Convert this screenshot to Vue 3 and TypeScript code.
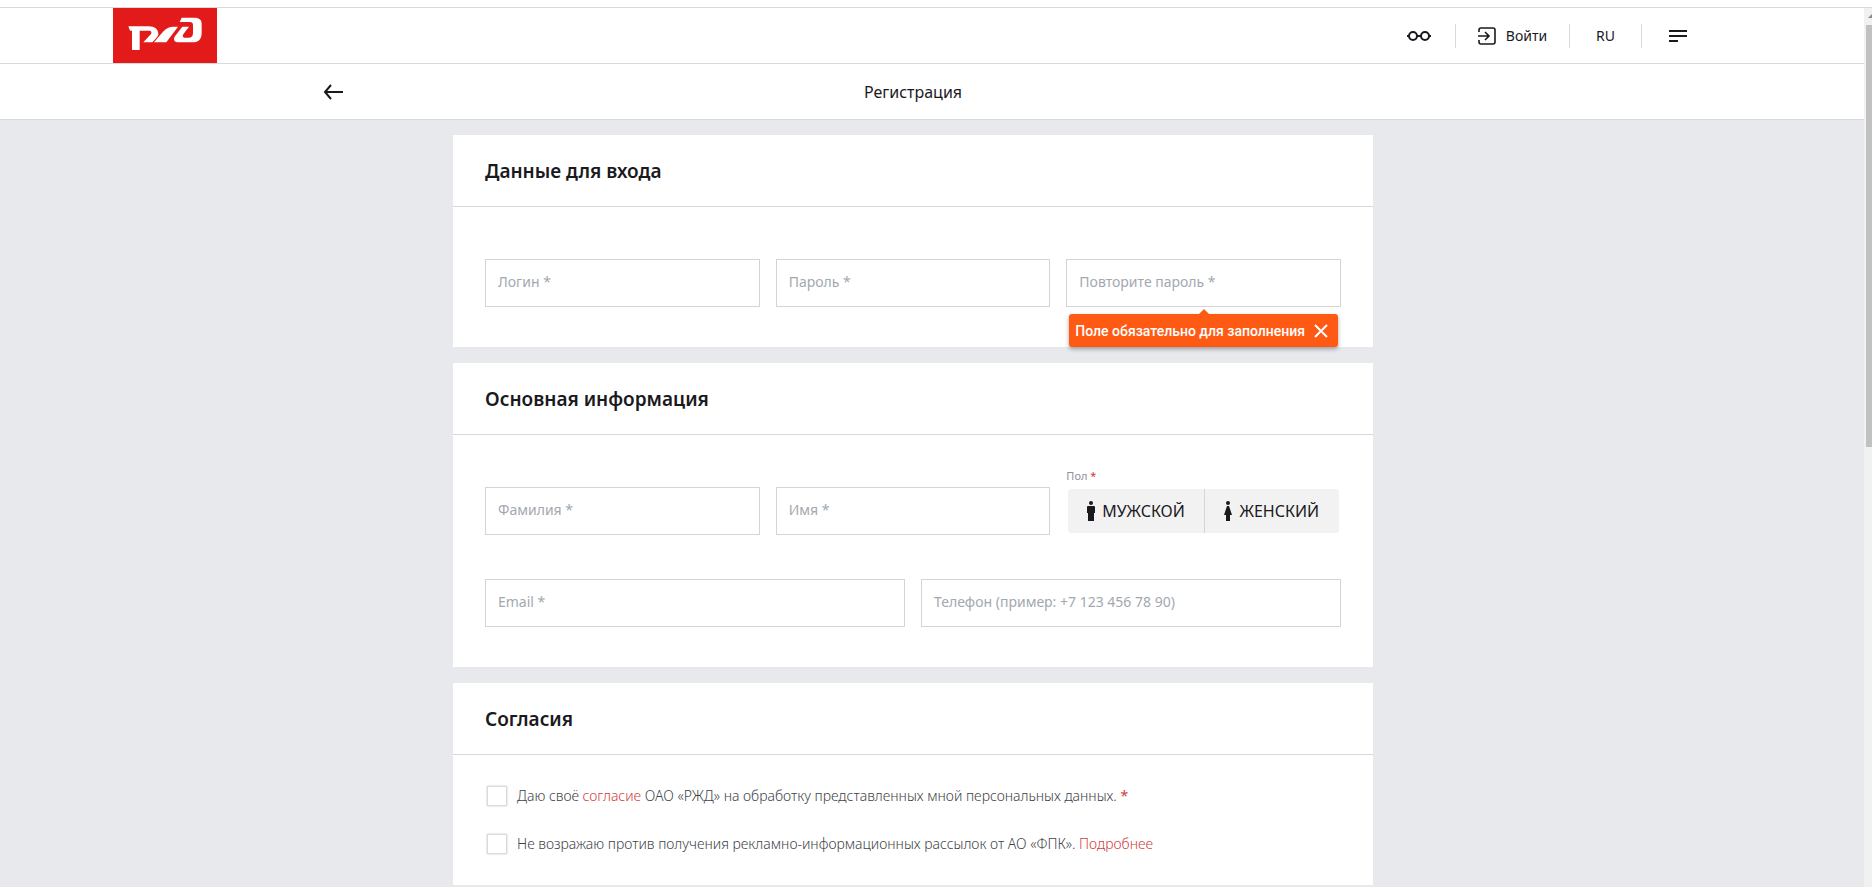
<script setup lang="ts">
import { reactive, ref } from 'vue'

interface Field {
  id: string
  label: string
  type: string
}

const loginFields: Field[] = [
  { id: 'login', label: 'Логин *', type: 'text' },
  { id: 'password', label: 'Пароль *', type: 'password' },
  { id: 'repeat', label: 'Повторите пароль *', type: 'password' },
]
const nameFields: Field[] = [
  { id: 'surname', label: 'Фамилия *', type: 'text' },
  { id: 'name', label: 'Имя *', type: 'text' },
]
const contactFields: Field[] = [
  { id: 'email', label: 'Email *', type: 'email' },
  { id: 'phone', label: 'Телефон (пример: +7 123 456 78 90)', type: 'tel' },
]

const values = reactive<Record<string, string>>({})
const showError = ref(true)
const gender = ref<'m' | 'f' | ''>('')
const agree = ref(false)
const mailing = ref(false)
</script>

<template>
  <div class="window">
    <div class="chrome"></div>
    <div class="viewport">
      <div class="page">
        <header class="bar">
          <div class="wide">
            <a class="logo" href="#">
              <svg viewBox="69 24 312 165" width="104" height="55">
                <g fill="#fff">
                  <path d="M115 79H176C194 79 205 88 205 102C205 107 201 112 196 117L187 127H160L183 102C186 98 184 92 178 92H149V150H126V92H120Z" />
                  <path d="M192 127L219 95C230 83 240 80 252 80H264L229 127Z" />
                  <path d="M269 66L275 53H313C329 53 335 60 335 72V98C335 117 326 127 308 127H266C252 127 248 117 256 107L277 80H297L281 101C276 108 279 113 286 113H295C305 113 309 108 309 98V76C309 69 306 66 299 66Z" />
                </g>
              </svg>
            </a>
            <nav class="menu">
              <button class="cell" type="button">
                <svg width="24" height="12" viewBox="0 0 24 12" fill="none" stroke="#1a1a1e" stroke-width="2">
                  <circle cx="6" cy="6" r="4" /><circle cx="18" cy="6" r="4" />
                  <path d="M0 6H2M10 6H14M22 6H24" />
                </svg>
              </button>
              <a class="cell login" href="#">
                <svg width="18" height="18" viewBox="0 0 18 18" fill="none" stroke="#1a1a1e" stroke-width="1.6">
                  <path d="M1 5V3A2 2 0 0 1 3 1H15A2 2 0 0 1 17 3V15A2 2 0 0 1 15 17H3A2 2 0 0 1 1 15V13M0 9H11M7 5L11 9L7 13" />
                </svg>
                Войти
              </a>
              <button class="cell" type="button">RU</button>
              <button class="cell" type="button">
                <svg width="18" height="12" viewBox="0 0 18 12" stroke="#1a1a1e" stroke-width="2">
                  <path d="M0 1H18M0 6H18M0 11H9" />
                </svg>
              </button>
            </nav>
          </div>
        </header>
        <div class="bar">
          <div class="narrow">
            <a class="back" href="#">
              <svg width="20" height="16" viewBox="0 0 20 16" fill="none" stroke="#1a1a1e" stroke-width="2">
                <path d="M20 8H2M8 1L2 8L8 15" />
              </svg>
            </a>
            <h1>Регистрация</h1>
          </div>
        </div>

        <main class="content">
          <form class="form" @submit.prevent>
            <section class="card">
              <h2>Данные для входа</h2>
              <div class="body thirds">
                <div v-for="f in loginFields" :key="f.id" class="field" :class="{ filled: values[f.id] }">
                  <input :id="f.id" v-model="values[f.id]" :type="f.type" />
                  <label :for="f.id">{{ f.label }}</label>
                  <div v-if="f.id === 'repeat' && showError" class="tip" role="alert">
                    <span>Поле обязательно для заполнения</span>
                    <button type="button" @click="showError = false">
                      <svg width="14" height="14" viewBox="0 0 14 14" stroke="#fff" stroke-width="2">
                        <path d="M1 1L13 13M13 1L1 13" />
                      </svg>
                    </button>
                  </div>
                </div>
              </div>
            </section>

            <section class="card">
              <h2>Основная информация</h2>
              <div class="body">
                <div class="thirds">
                  <div v-for="f in nameFields" :key="f.id" class="field" :class="{ filled: values[f.id] }">
                    <input :id="f.id" v-model="values[f.id]" :type="f.type" />
                    <label :for="f.id">{{ f.label }}</label>
                  </div>
                  <fieldset class="gender">
                    <legend>Пол <i>*</i></legend>
                    <div class="toggle">
                      <button type="button" :aria-pressed="gender === 'm'" @click="gender = 'm'">
                        <svg width="8" height="20" viewBox="0 0 8 20" fill="#1a1a1e">
                          <circle cx="4" cy="2" r="2" />
                          <path d="M1 5H7Q8 5 8 6V12H7V20H1V12H0V6Q0 5 1 5Z" />
                        </svg>
                        МУЖСКОЙ
                      </button>
                      <button type="button" :aria-pressed="gender === 'f'" @click="gender = 'f'">
                        <svg width="8" height="20" viewBox="0 0 8 20" fill="#1a1a1e">
                          <circle cx="4" cy="2" r="2" />
                          <path d="M3 5H5L8 14H6V20H2V14H0Z" />
                        </svg>
                        ЖЕНСКИЙ
                      </button>
                    </div>
                  </fieldset>
                </div>
                <div class="halves">
                  <div v-for="f in contactFields" :key="f.id" class="field" :class="{ filled: values[f.id] }">
                    <input :id="f.id" v-model="values[f.id]" :type="f.type" />
                    <label :for="f.id">{{ f.label }}</label>
                  </div>
                </div>
              </div>
            </section>

            <section class="card">
              <h2>Согласия</h2>
              <div class="consents">
                <div class="consent">
                  <input id="agree" v-model="agree" type="checkbox" />
                  <label for="agree">Даю своё <a href="#">согласие</a> ОАО «РЖД» на обработку представленных мной персональных данных. <b>*</b></label>
                </div>
                <div class="consent">
                  <input id="mailing" v-model="mailing" type="checkbox" />
                  <label for="mailing">Не возражаю против получения рекламно-информационных рассылок от АО «ФПК». <a href="#">Подробнее</a></label>
                </div>
              </div>
            </section>
          </form>
        </main>
      </div>
      <div class="scroll">
        <svg width="8" height="17" viewBox="0 0 8 17"><path d="M4 10L8 6V10Z" fill="#8a8a8a" /></svg>
        <div class="thumb"></div>
      </div>
    </div>
  </div>
</template>

<style>
body {
  overflow: hidden;
}
</style>

<style scoped>
.window,
.window * {
  box-sizing: border-box;
}
.window {
  display: flex;
  flex-direction: column;
  height: 100vh;
  font-family: "Noto Sans", "Open Sans", sans-serif;
  font-size: 14px;
  line-height: 20px;
  color: #1a1a1e;
  background: #fff;
}
.chrome {
  flex: none;
  height: 8px;
  border-bottom: 1px solid #d9d9dc;
}
.viewport {
  flex: 1;
  min-height: 0;
  display: flex;
}
.page {
  flex: 1;
  overflow: hidden;
  background: #e8e9ed;
}
.bar {
  height: 56px;
  padding-right: 38px;
  background: #fff;
  border-bottom: 1px solid #d8d9dc;
}
.wide {
  display: flex;
  justify-content: space-between;
  max-width: 1600px;
  height: 100%;
  margin: 0 auto;
}
.logo {
  background: #e21a1a;
}
.logo svg {
  display: block;
}
.menu {
  display: flex;
  align-items: center;
}
button {
  padding: 0;
  border: 0;
  background: none;
  color: inherit;
  font: inherit;
  cursor: pointer;
}
.cell {
  display: flex;
  align-items: center;
  justify-content: center;
  width: 72px;
  height: 24px;
  color: inherit;
  text-decoration: none;
}
.cell + .cell {
  border-left: 1px solid #d8d9dc;
}
.cell.login {
  width: 114px;
  gap: 10px;
}
.narrow {
  display: grid;
  grid-template-columns: 1fr auto 1fr;
  align-items: center;
  max-width: 1180px;
  height: 100%;
  margin: 0 auto;
}
.back svg {
  display: block;
}
h1 {
  margin: 0;
  font-size: 16px;
  font-weight: 400;
}
.content {
  padding: 15px 38px 16px 0;
}
.form {
  display: flex;
  flex-direction: column;
  gap: 16px;
  max-width: 920px;
  margin: 0 auto;
}
.card {
  background: #fff;
}
h2 {
  margin: 0;
  padding: 22px 32px 21px;
  border-bottom: 1px solid #d5d9db;
  font-size: 19px;
  line-height: 28px;
  font-weight: 600;
}
.body {
  padding: 28px 32px 40px;
}
.thirds {
  display: grid;
  grid-template-columns: repeat(3, 1fr);
  gap: 16px;
}
.halves {
  display: grid;
  grid-template-columns: repeat(2, 1fr);
  gap: 16px;
  margin-top: 20px;
}
.field {
  position: relative;
  padding-top: 24px;
}
.field input {
  display: block;
  width: 100%;
  height: 48px;
  padding: 0 12px;
  border: 1px solid #d3d4d8;
  border-radius: 0;
  background: #fff;
  font: inherit;
  outline: 0;
}
.field label {
  position: absolute;
  left: 13px;
  top: 37px;
  color: #a3a8b0;
  pointer-events: none;
}
.field.filled label {
  top: 2px;
  left: 0;
  font-size: 10px;
}
.tip {
  position: absolute;
  z-index: 1;
  top: 79px;
  left: 3px;
  right: 3px;
  display: flex;
  align-items: center;
  justify-content: space-between;
  height: 33px;
  padding: 0 10px 0 6px;
  border-radius: 3px;
  background: #ff5a14;
  box-shadow: 0 2px 4px rgba(0, 0, 0, 0.35);
  color: #fff;
  font-family: Roboto, sans-serif;
  font-weight: 500;
  white-space: nowrap;
}
.tip::before {
  content: "";
  position: absolute;
  left: 50%;
  bottom: 100%;
  margin-left: -5px;
  border: 5px solid transparent;
  border-top: 0;
  border-bottom-color: #ff5a14;
}
.tip svg {
  display: block;
}
.gender {
  min-width: 0;
  margin: 0;
  padding: 0;
  border: 0;
}
legend {
  height: 26px;
  padding: 3px 0 0;
  color: #8f9299;
  font-size: 11px;
}
legend i {
  color: #d33;
  font-style: normal;
}
.toggle {
  display: grid;
  grid-template-columns: 1fr 1fr;
  height: 44px;
  margin: 0 2px;
  border-radius: 3px;
  background: #f2f2f2;
}
.toggle button {
  display: flex;
  align-items: center;
  justify-content: center;
  gap: 7px;
  font-size: 16px;
}
.toggle button + button {
  border-left: 1px solid #d6d6d6;
}
.consents {
  display: flex;
  flex-direction: column;
  gap: 28px;
  padding: 31px 34px;
}
.consent {
  display: flex;
  align-items: center;
  gap: 10px;
  height: 20px;
  color: #404348;
  font-weight: 300;
}
.consent input {
  appearance: none;
  width: 20px;
  height: 20px;
  margin: 0;
  border: 1px solid #d8d9dc;
  box-shadow: 0 0 2px #c8c9cc;
  background: #fff;
}
.consent input:checked {
  background: #e21a1a;
}
.consent a {
  color: #d0403c;
  text-decoration: none;
}
.consent b {
  color: #d0403c;
}
.scroll {
  flex: none;
  width: 8px;
  background: #f1f1f1;
}
.scroll svg {
  display: block;
}
.thumb {
  height: 48%;
  margin-left: 2px;
  background: #c1c1c1;
}
</style>
